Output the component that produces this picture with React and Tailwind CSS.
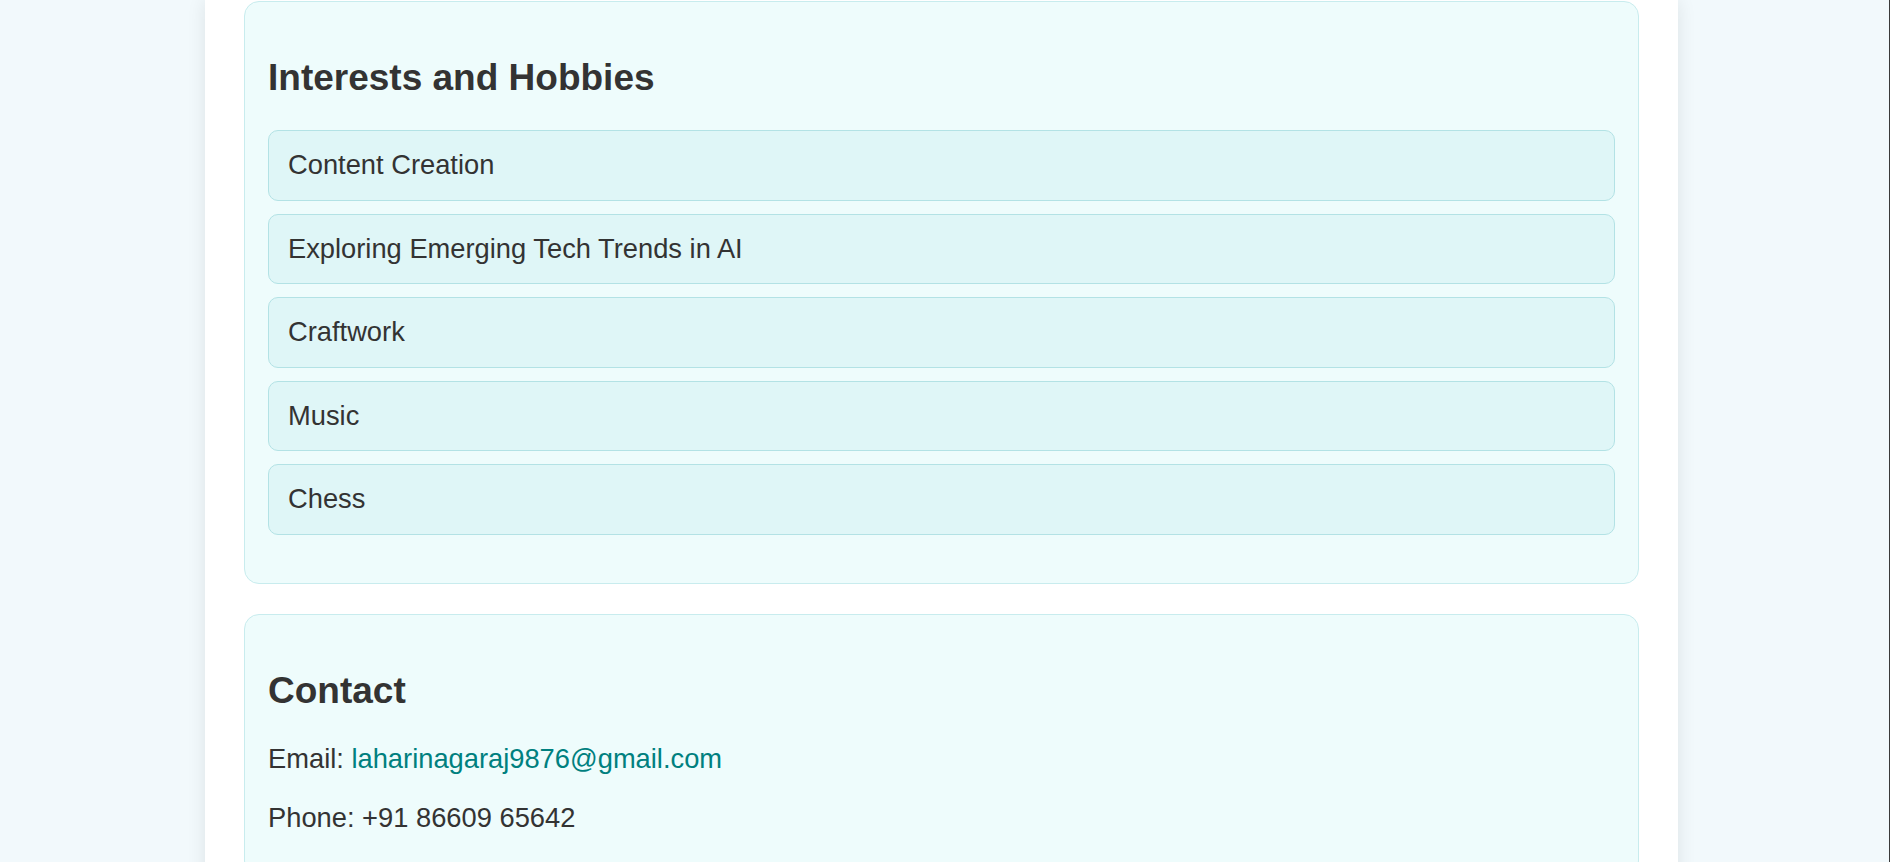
const interests = [
  'Content Creation',
  'Exploring Emerging Tech Trends in AI',
  'Craftwork',
  'Music',
  'Chess',
]

function Section({ title, children, className = '' }) {
  return (
    <section className={`rounded-[15px] border border-[#c8ecee] bg-[#eefcfc] px-[23px] pt-[55px] ${className}`}>
      <h2 className="text-[37px] font-bold leading-[41px] text-[#333]">{title}</h2>
      {children}
    </section>
  )
}

export default function App() {
  return (
    <div className="min-h-screen overflow-hidden border-r border-[#3a3a3a] bg-[#f2f9fc] font-['Liberation_Sans',Arial,sans-serif] text-[#333]">
      <div className="ml-[205px] min-h-[862px] w-[1473px] bg-white px-[39px] pt-px pb-10 shadow-[0_0_18px_rgba(0,0,0,0.09)]">
        <Section title="Interests and Hobbies" className="pb-[48px]">
          <ul className="mt-[32px] flex flex-col gap-[13px]">
            {interests.map((item) => (
              <li
                key={item}
                className="flex h-[70.5px] items-center rounded-[10px] border border-[#b3e2e5] bg-[#dff6f7] px-[19px] text-[27.3px] leading-[30px]"
              >
                {item}
              </li>
            ))}
          </ul>
        </Section>

        <Section title="Contact" className="mt-[30px] pb-10">
          <div className="mt-[31px] flex flex-col gap-[25px] text-[27.3px] leading-[34px]">
            <p>
              Email:{' '}
              <a href="mailto:laharinagaraj9876@gmail.com" className="text-[#00807f]">
                laharinagaraj9876@gmail.com
              </a>
            </p>
            <p>Phone: +91 86609 65642</p>
          </div>
        </Section>
      </div>
    </div>
  )
}
